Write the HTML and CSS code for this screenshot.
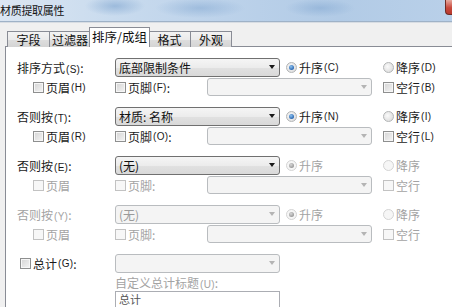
FILE: index.html
```html
<!DOCTYPE html>
<html lang="zh">
<head>
<meta charset="utf-8">
<title>材质提取属性</title>
<link rel="stylesheet" href="styles.css">
</head>
<body>
<div class="window">
  <div class="titlebar">
    <span class="title">材质提取属性</span>
    <span class="close"></span>
  </div>
  <div class="client">
    <div class="tabs">
      <div class="tab t1">字段</div>
      <div class="tab t2">过滤器</div>
      <div class="tab t3 active">排序/成组</div>
      <div class="tab t4">格式</div>
      <div class="tab t5">外观</div>
    </div>
    <div class="panel">
      <div class="group">
        <div class="row">
          <span class="label">排序方式<span class="acc">(S)</span>:</span>
          <div class="combo wide"><span class="val">底部限制条件</span><i class="arrow"></i></div>
          <span class="opt"><i class="radio on"></i>升序<span class="acc">(C)</span></span>
          <span class="opt"><i class="radio"></i>降序<span class="acc">(D)</span></span>
        </div>
        <div class="row">
          <span class="opt indent"><i class="check"></i>页眉<span class="acc">(H)</span></span>
          <span class="opt"><i class="check"></i>页脚<span class="acc">(F)</span>:</span>
          <div class="combo wide sub off"><i class="arrow"></i></div>
          <span class="opt"><i class="check"></i>空行<span class="acc">(B)</span></span>
        </div>
      </div>
      <div class="group">
        <div class="row">
          <span class="label">否则按<span class="acc">(T)</span>:</span>
          <div class="combo wide"><span class="val">材质: 名称</span><i class="arrow"></i></div>
          <span class="opt"><i class="radio on"></i>升序<span class="acc">(N)</span></span>
          <span class="opt"><i class="radio"></i>降序<span class="acc">(I)</span></span>
        </div>
        <div class="row">
          <span class="opt indent"><i class="check"></i>页眉<span class="acc">(R)</span></span>
          <span class="opt"><i class="check"></i>页脚<span class="acc">(O)</span>:</span>
          <div class="combo wide sub off"><i class="arrow"></i></div>
          <span class="opt"><i class="check"></i>空行<span class="acc">(L)</span></span>
        </div>
      </div>
      <div class="group">
        <div class="row">
          <span class="label">否则按<span class="acc">(E)</span>:</span>
          <div class="combo wide"><span class="val">(无)</span><i class="arrow"></i></div>
          <span class="opt dis"><i class="radio on"></i>升序</span>
          <span class="opt dis"><i class="radio"></i>降序</span>
        </div>
        <div class="row">
          <span class="opt indent dis"><i class="check"></i>页眉</span>
          <span class="opt dis"><i class="check"></i>页脚:</span>
          <div class="combo wide sub off"><i class="arrow"></i></div>
          <span class="opt dis"><i class="check"></i>空行</span>
        </div>
      </div>
      <div class="group">
        <div class="row">
          <span class="label dis">否则按<span class="acc">(Y)</span>:</span>
          <div class="combo wide off"><span class="val">(无)</span><i class="arrow"></i></div>
          <span class="opt dis"><i class="radio on"></i>升序</span>
          <span class="opt dis"><i class="radio"></i>降序</span>
        </div>
        <div class="row">
          <span class="opt indent dis"><i class="check"></i>页眉</span>
          <span class="opt dis"><i class="check"></i>页脚:</span>
          <div class="combo wide sub off"><i class="arrow"></i></div>
          <span class="opt dis"><i class="check"></i>空行</span>
        </div>
      </div>
      <div class="row">
        <span class="opt total"><i class="check"></i>总计<span class="acc">(G)</span>:</span>
        <div class="combo wide off"><i class="arrow"></i></div>
      </div>
      <div class="row cap">
        <span class="caption dis">自定义总计标题<span class="acc">(U)</span>:</span>
      </div>
      <div class="row tall">
        <div class="textbox">总计</div>
      </div>
    </div>
  </div>
</div>
</body>
</html>
```

FILE: styles.css
```css
* { box-sizing: border-box; }
html, body {
  margin: 0;
  padding: 0;
}
body {
  width: 452px;
  height: 307px;
  overflow: hidden;
  background: #f0f0f0;
  font-family: "Noto Sans CJK SC", "Noto Sans", sans-serif;
  font-size: 12px;
  color: #1a1a1a;
}
.window { width: 452px; height: 307px; overflow: hidden; }

.titlebar {
  height: 22px;
  display: flex;
  align-items: flex-start;
  background:
    radial-gradient(ellipse 30px 10px at 115px 6px, rgba(120,160,205,0.55), rgba(120,160,205,0)),
    radial-gradient(ellipse 45px 10px at 200px 8px, rgba(120,160,205,0.45), rgba(120,160,205,0)),
    radial-gradient(ellipse 35px 9px at 320px 8px, rgba(120,160,205,0.45), rgba(120,160,205,0)),
    linear-gradient(to right, #dbe6f2 0%, #c9dbee 25%, #bcd2ea 50%, #b2cbe6 75%, #b9d0e9 100%);
  border-bottom: 1px solid #9fb2c7;
  box-shadow: 0 1px 0 #d8dde3;
}
.title {
  font-size: 11px;
  line-height: 20px;
  color: #111;
  letter-spacing: -0.3px;
  flex: 1;
}
.close {
  width: 7px;
  height: 15px;
  background: linear-gradient(#e7a99e, #c8493d 55%, #b8382c);
  border: 1px solid #6f2c25;
  border-right: none;
  border-top: none;
  border-radius: 0 0 0 4px;
}

.client { padding-top: 5px; }

.tabs {
  display: flex;
  align-items: flex-end;
  height: 20px;
  margin-left: 7px;
  position: relative;
  z-index: 1;
  margin-bottom: -1px;
}
.tab {
  height: 16px;
  margin-right: -1px;
  border: 1px solid #898c95;
  border-bottom: none;
  background: linear-gradient(#f3f3f3 0%, #ebebeb 50%, #dedede 51%, #d4d4d4 100%);
  text-align: center;
  font-size: 12px;
  line-height: 15px;
  color: #111;
}
.t1 { width: 43px; }
.t2 { width: 42px; }
.t3 { width: 60px; }
.t4 { width: 43px; }
.t5 { width: 42px; }
.tab.active {
  height: 20px;
  background: #fff;
  line-height: 18px;
  font-size: 12.5px;
  position: relative;
  z-index: 2;
  margin-left: -1px;
  margin-right: -2px;
  width: 61px;
}

.panel {
  margin-left: 5px;
  width: 460px;
  height: 280px;
  background: #fff;
  border: 1px solid #898c95;
  padding: 10px 0 0 11px;
}

.group { margin-bottom: 9px; }

.row {
  display: grid;
  grid-template-columns: 98px 92px 77px 99px 1fr;
  align-items: center;
  height: 20px;
  white-space: nowrap;
}
.row.cap { height: 18px; }
.row.tall { height: 18px; align-items: start; }

.label { grid-column: 1; }
.acc {
  font-family: "Liberation Sans", "DejaVu Sans", sans-serif;
  font-size: 10px;
  letter-spacing: 0.3px;
  margin-left: 1px;
}
.dis { color: #a3a3a3; }

.opt {
  display: flex;
  align-items: center;
}
.opt.indent { padding-left: 16px; }
.opt.total { padding-left: 3px; }
.row > .opt:nth-child(3) { padding-left: 2px; }

.check {
  display: inline-block;
  width: 11px;
  height: 11px;
  margin-right: 2px;
  border: 1px solid #8e8f8f;
  background: linear-gradient(135deg, #d4d4d4, #f4f4f4);
  box-shadow: inset 0 0 0 1px #f6f6f6;
}
.dis .check {
  border-color: #c2c2c2;
  background: #f7f7f7;
  box-shadow: none;
}
.radio {
  display: inline-block;
  width: 11px;
  height: 11px;
  margin-right: 2px;
  border-radius: 50%;
  border: 1px solid #b3b5b6;
  background: radial-gradient(circle at 40% 40%, #fafafa, #d6d6d6);
  position: relative;
}
.radio.on::after {
  content: "";
  position: absolute;
  left: 2px;
  top: 2px;
  width: 5px;
  height: 5px;
  border-radius: 50%;
  background: radial-gradient(circle at 40% 35%, #8fc3f0, #2a67b1 70%);
}
.dis .radio { border-color: #d4d4d4; background: #f6f6f6; }
.dis .radio.on::after { background: radial-gradient(circle at 40% 35%, #d8d8d8, #9a9a9a 70%); }

.combo {
  grid-column: span 2;
  width: 165px;
  height: 19px;
  display: flex;
  align-items: center;
  padding: 0 4px 0 3px;
  border: 1px solid #707070;
  border-radius: 3px;
  background: linear-gradient(#f5f5f5 0%, #ececec 50%, #e1e1e1 51%, #d9d9d9 100%);
  color: #111;
}
.combo .val { flex: 1; line-height: 17px; }
.arrow {
  margin-left: auto;
  width: 0;
  height: 0;
  border-left: 3.5px solid transparent;
  border-right: 3.5px solid transparent;
  border-top: 4px solid #1a1a1a;
}
.combo.off {
  border-color: #b9bcbf;
  background: #f4f4f4;
  color: #9a9a9a;
}
.combo.off .arrow { border-top-color: #b4b4b4; }
.combo.sub { height: 18px; }

.caption { grid-column: 2 / span 3; }
.textbox {
  grid-column: 2 / span 2;
  width: 165px;
  height: 18px;
  border: 1px solid #abadb3;
  border-bottom: none;
  background: #fff;
  padding: 1px 3px 0;
  font-size: 11px;
  line-height: 12px;
  color: #555;
}
```
